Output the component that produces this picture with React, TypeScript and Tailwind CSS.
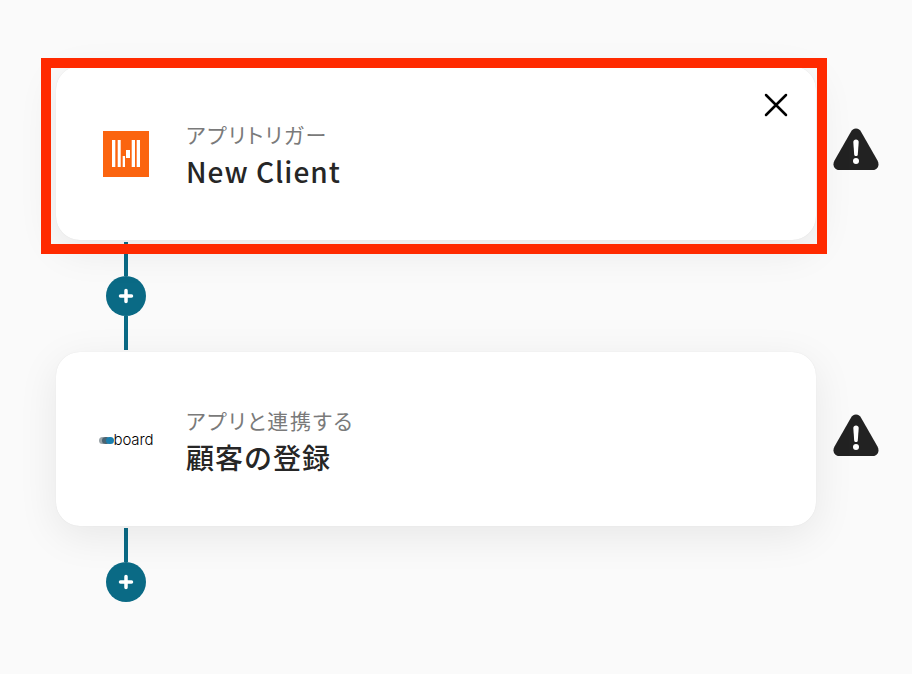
const jp = "font-['Noto_Sans_CJK_JP','Noto_Sans',sans-serif]";

function Warning() {
  return (
    <svg width="46" height="42" viewBox="0 0 46 42" className="shrink-0 -mt-[9px]">
      <path d="M23 0.500 C20.500 0.500 19 2 17.800 4 L1.500 32.500 C-1 37 1.500 42 6 42 L40 42 C44.500 42 47 37 44.500 32.500 L28.200 4 C27 2 25.500 0.500 23 0.500 Z" fill="#222222" />
      <path d="M20.300 14 C20.300 12.500 21.500 11.500 23 11.500 C24.500 11.500 25.700 12.500 25.700 14 L24.800 26.500 C24.700 27.500 24 28 23 28 C22 28 21.300 27.500 21.200 26.500 Z" fill="#ffffff" />
      <circle cx="23" cy="33" r="3" fill="#ffffff" />
    </svg>
  );
}

function Connector() {
  return <div className="w-1 h-[34px] bg-[#0a6a85]" />;
}

function PlusButton() {
  return (
    <div className="w-10 h-10 rounded-full bg-[#0a6a85] flex items-center justify-center shrink-0">
      <svg width="16" height="16" viewBox="0 0 16 16">
        <path d="M8 2.500 L8 13.500 M2.500 8 L13.500 8" stroke="#ffffff" strokeWidth="3.500" strokeLinecap="round" />
      </svg>
    </div>
  );
}

function BrandMark() {
  return (
    <svg width="46" height="46" viewBox="0 0 46 46" className="ml-[10px] mt-[2px]">
      <rect width="46" height="46" fill="#fb640f" />
      <rect x="9" y="9" width="3.300" height="27" fill="#fff" />
      <rect x="14.700" y="9" width="3" height="27" fill="#fff" />
      <rect x="19.700" y="25" width="2.300" height="11" fill="#fff" />
      <rect x="23" y="19" width="4" height="8" fill="#fff" />
      <rect x="28.700" y="9" width="3.300" height="27" fill="#fff" />
      <rect x="33.700" y="9" width="3.300" height="27" fill="#fff" />
    </svg>
  );
}

function BoardMark() {
  return (
    <div className="flex items-center ml-[10px] mt-[2px]">
      <div className="relative w-[15px] h-[7px]">
        <div className="absolute left-0 top-0 w-[7px] h-[7px] rounded-full bg-[#9aa3a8]" />
        <div className="absolute left-[3px] top-0 w-[8px] h-[7px] rounded-full bg-[#4b6472]" />
        <div className="absolute left-[7px] top-0 w-[8px] h-[7px] rounded-full bg-[#1b7fae]" />
      </div>
      <span className="font-['Inter',sans-serif] text-[15px] leading-none font-light tracking-[-0.1px] text-black -mt-[2px]">board</span>
    </div>
  );
}

function Card({ icon, label, title, close }: { icon: React.ReactNode; label: string; title: string; close?: boolean }) {
  return (
    <div className="relative w-[760px] h-[174px] rounded-3xl bg-white shadow-[0_10px_40px_rgba(0,0,0,0.08),0_0_1px_rgba(0,0,0,0.1)] flex items-center">
      <div className="w-[130px] flex justify-center shrink-0">{icon}</div>
      <div className="flex flex-col gap-[3px] mt-[4px]">
        <div className="text-[21px] leading-[28px] tracking-[1.7px] text-[#7a7a7a] [font-feature-settings:'palt']">{label}</div>
        <div className="text-[28px] leading-[40px] font-medium tracking-[1px] text-[#262626]">{title}</div>
      </div>
      {close && (
        <svg width="26" height="26" viewBox="0 0 26 26" className="absolute right-[27px] top-[26px]">
          <path d="M3 3 L23 23 M23 3 L3 23" stroke="#000000" strokeWidth="2.500" strokeLinecap="round" />
        </svg>
      )}
    </div>
  );
}

function Step({ card }: { card: React.ReactNode }) {
  return (
    <div className="flex items-center gap-[17px]">
      {card}
      <Warning />
    </div>
  );
}

export default function App() {
  return (
    <div className={`relative w-[912px] h-[674px] overflow-hidden bg-[#fafafa] ${jp}`}>
      <div className="pt-[66px] pl-[56px] flex flex-col items-start">
        <Step card={<Card icon={<BrandMark />} label="アプリトリガー" title="New Client" close />} />
        <div className="w-10 ml-[50px] py-[2px] flex flex-col items-center">
          <Connector />
          <PlusButton />
          <Connector />
        </div>
        <Step card={<Card icon={<BoardMark />} label="アプリと連携する" title="顧客の登録" />} />
        <div className="w-10 ml-[50px] py-[2px] flex flex-col items-center">
          <Connector />
          <PlusButton />
        </div>
      </div>
      <div className="absolute left-[41px] top-[58px] w-[786px] h-[196px] border-[10px] border-[#ff2a00]" />
    </div>
  );
}
